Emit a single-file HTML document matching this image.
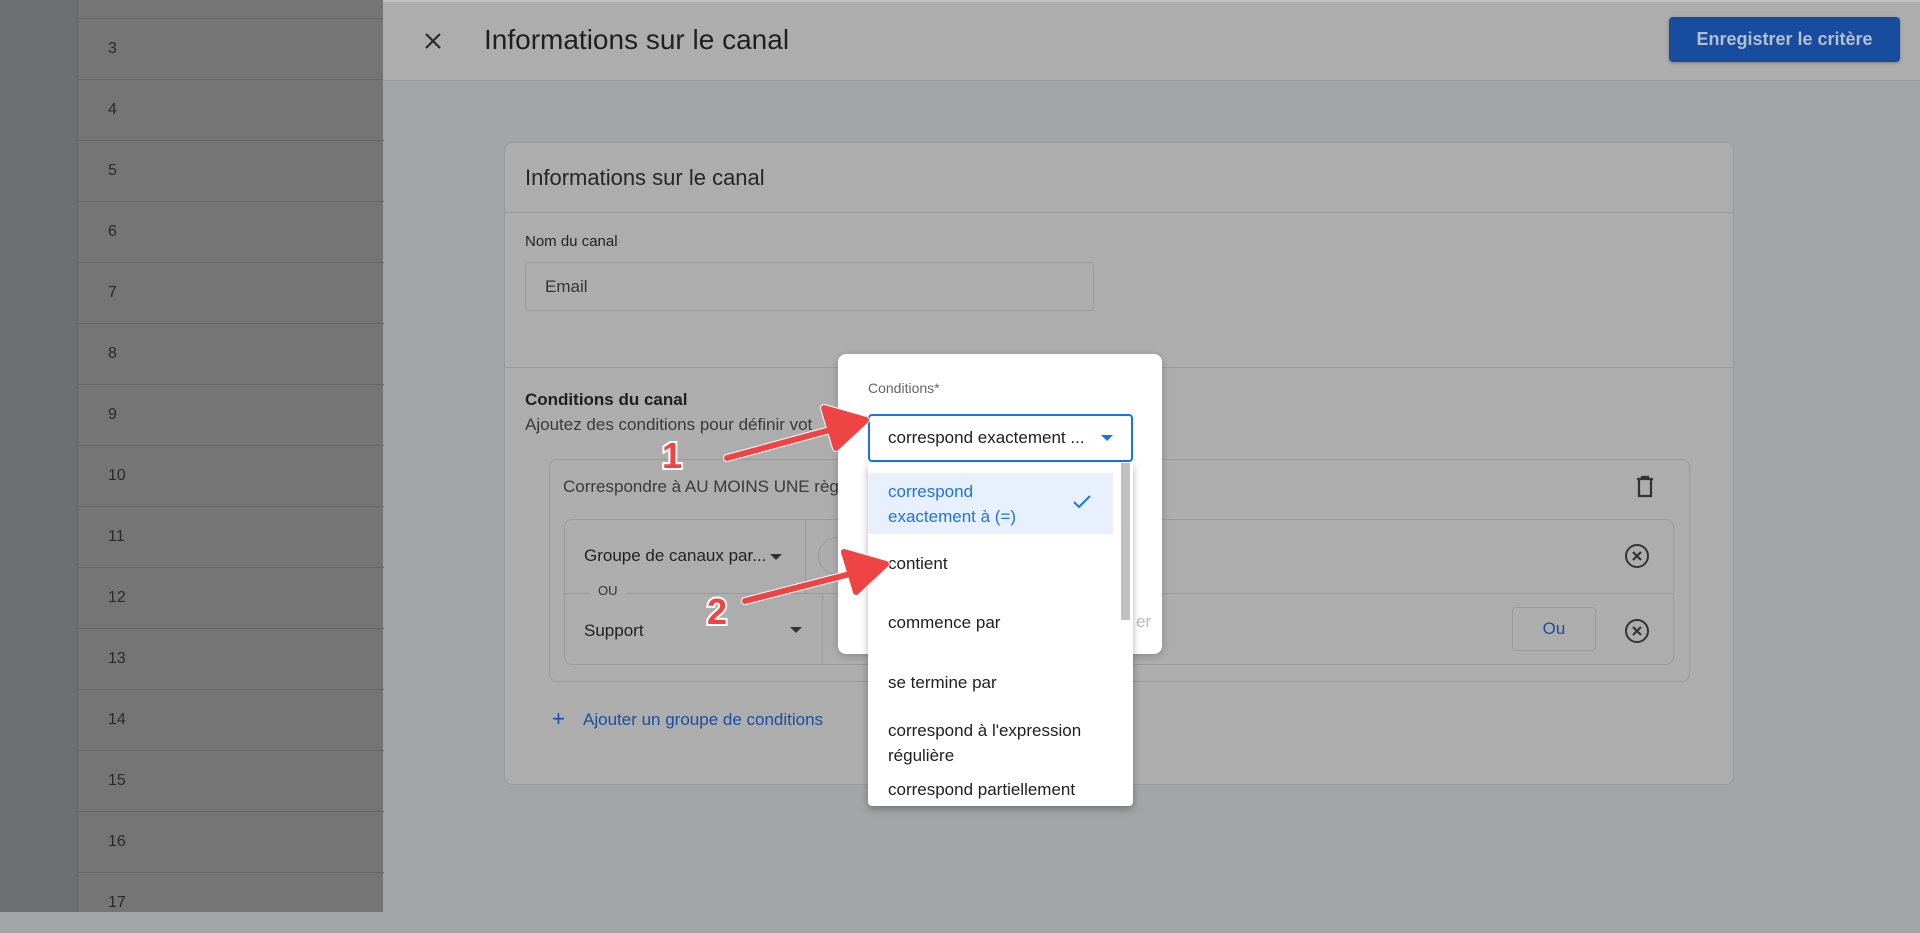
<!DOCTYPE html>
<html><head><meta charset="utf-8"><style>
*{margin:0;padding:0;box-sizing:border-box}
body{width:1920px;height:912px;overflow:hidden;position:relative;font-family:"Liberation Sans",Arial,sans-serif;background:#a4a5a7}
.a{position:absolute}
.left{left:0;top:0;width:77px;height:912px;background:#6d6e6f}
.tbl{left:77px;top:0;width:306px;height:912px;background:#757575;border-left:1px solid #666}
.row{position:absolute;left:0;width:306px;border-top:1px solid #666;height:61px}
.num{position:absolute;left:30px;font-size:16px;color:#2a2a2a}
.t{white-space:nowrap}
</style></head><body>
<div class="a left"></div>
<div class="a tbl">
<div class="row" style="top:18px"></div><div class="row" style="top:79px"></div><div class="row" style="top:140px"></div><div class="row" style="top:201px"></div><div class="row" style="top:262px"></div><div class="row" style="top:323px"></div><div class="row" style="top:384px"></div><div class="row" style="top:445px"></div><div class="row" style="top:506px"></div><div class="row" style="top:567px"></div><div class="row" style="top:628px"></div><div class="row" style="top:689px"></div><div class="row" style="top:750px"></div><div class="row" style="top:811px"></div><div class="row" style="top:872px"></div>
<div class="num" style="top:40px">3</div><div class="num" style="top:101px">4</div><div class="num" style="top:162px">5</div><div class="num" style="top:223px">6</div><div class="num" style="top:284px">7</div><div class="num" style="top:345px">8</div><div class="num" style="top:406px">9</div><div class="num" style="top:467px">10</div><div class="num" style="top:528px">11</div><div class="num" style="top:589px">12</div><div class="num" style="top:650px">13</div><div class="num" style="top:711px">14</div><div class="num" style="top:772px">15</div><div class="num" style="top:833px">16</div><div class="num" style="top:894px">17</div>
</div>
<div class="a" style="left:383px;top:0;width:1537px;height:81px;background:#adadad;border-bottom:1px solid #999;border-top:2px solid #c4c4c4"></div>
<svg class="a" style="left:423px;top:31px" width="20" height="20" viewBox="0 0 20 20"><path d="M3 3L17 17M17 3L3 17" stroke="#2a2a2a" stroke-width="2.2"/></svg>
<div class="a t" style="left:484px;top:24px;font-size:28px;color:#1f1f1f">Informations sur le canal</div>
<div class="a t" style="left:1669px;top:17px;width:231px;height:45px;background:#174c9e;border-radius:4px;color:#b4bfd2;font-size:18px;font-weight:bold;text-align:center;line-height:45px;box-shadow:0 1px 3px rgba(0,0,0,.3)">Enregistrer le critère</div>
<div class="a" style="left:504px;top:142px;width:1230px;height:643px;background:#adadad;border:1px solid #999;border-radius:8px"></div>
<div class="a t" style="left:525px;top:165px;font-size:22px;color:#262626">Informations sur le canal</div>
<div class="a" style="left:505px;top:212px;width:1228px;height:1px;background:#999"></div>
<div class="a t" style="left:525px;top:233px;font-size:15px;color:#222">Nom du canal</div>
<div class="a" style="left:525px;top:262px;width:569px;height:49px;border:1px solid #999;border-radius:4px"></div>
<div class="a t" style="left:545px;top:277px;font-size:17px;color:#333">Email</div>
<div class="a" style="left:505px;top:367px;width:1228px;height:1px;background:#999"></div>
<div class="a t" style="left:525px;top:390px;font-size:17px;font-weight:bold;color:#1f1f1f">Conditions du canal</div>
<div class="a t" style="left:525px;top:415px;font-size:17px;color:#3a3a3a">Ajoutez des conditions pour définir vot</div>
<div class="a" style="left:549px;top:459px;width:1141px;height:223px;border:1px solid #999;border-radius:8px"></div>
<div class="a t" style="left:563px;top:477px;font-size:17px;color:#3a3a3a">Correspondre à AU MOINS UNE règ</div>
<svg class="a" style="left:1634px;top:475px" width="22" height="24" viewBox="0 0 22 24"><path d="M3 4H19M8 4V2H14V4M5 4V21H17V4" fill="none" stroke="#333" stroke-width="2.2"/></svg>
<div class="a" style="left:564px;top:519px;width:1110px;height:146px;border:1px solid #999;border-radius:8px"></div>
<div class="a" style="left:565px;top:593px;width:1108px;height:1px;background:#999"></div>
<div class="a" style="left:805px;top:520px;width:1px;height:73px;background:#999"></div>
<div class="a" style="left:822px;top:594px;width:1px;height:70px;background:#999"></div>
<div class="a" style="left:818px;top:537px;width:32px;height:38px;border:1px solid #999;border-radius:19px 0 0 19px;border-right:none"></div>
<div class="a t" style="left:584px;top:546px;font-size:17px;color:#222">Groupe de canaux par...</div>
<div class="a" style="left:770px;top:554px;border:6px solid transparent;border-top:6px solid #333"></div>
<div class="a t" style="left:590px;top:583px;font-size:13px;color:#333;background:#adadad;padding:0 8px">OU</div>
<div class="a t" style="left:584px;top:621px;font-size:17px;color:#222">Support</div>
<div class="a" style="left:790px;top:627px;border:6px solid transparent;border-top:6px solid #333"></div>
<div class="a t" style="left:1512px;top:607px;width:84px;height:44px;border:1px solid #999;border-radius:4px;text-align:center;line-height:42px;font-size:17px;color:#1a4ea0">Ou</div>
<svg class="a" style="left:1624px;top:543px" width="26" height="26" viewBox="0 0 26 26"><circle cx="13" cy="13" r="11" fill="none" stroke="#333" stroke-width="2"/><path d="M9 9L17 17M17 9L9 17" stroke="#333" stroke-width="2.2"/></svg>
<svg class="a" style="left:1624px;top:618px" width="26" height="26" viewBox="0 0 26 26"><circle cx="13" cy="13" r="11" fill="none" stroke="#333" stroke-width="2"/><path d="M9 9L17 17M17 9L9 17" stroke="#333" stroke-width="2.2"/></svg>
<div class="a t" style="left:552px;top:706px;font-size:22px;color:#1a4ea0">+</div>
<div class="a t" style="left:583px;top:710px;font-size:17px;color:#1a4ea0">Ajouter un groupe de conditions</div>
<div class="a" style="left:838px;top:354px;width:324px;height:300px;background:#fff;border-radius:8px;box-shadow:0 2px 8px rgba(0,0,0,.2)"></div>
<div class="a t" style="left:1136px;top:612px;font-size:17px;color:#bbb">er</div>
<div class="a t" style="left:868px;top:380px;font-size:14px;color:#666">Conditions*</div>
<div class="a" style="left:868px;top:414px;width:265px;height:48px;border:2px solid #1a73e8;border-radius:4px"></div>
<div class="a t" style="left:888px;top:428px;font-size:17px;color:#202020">correspond exactement ...</div>
<div class="a" style="left:1101px;top:435px;border:6px solid transparent;border-top:6px solid #1a73e8"></div>
<div class="a" style="left:868px;top:463px;width:265px;height:343px;background:#fff;box-shadow:0 3px 8px rgba(0,0,0,.3);border-radius:0 0 4px 4px"></div>
<div class="a" style="left:1121px;top:463px;width:9px;height:157px;background:#c1c1c1"></div>
<div class="a" style="left:868px;top:473px;width:245px;height:61px;background:#e8f0fe"></div>
<div class="a" style="left:888px;top:479px;font-size:17px;line-height:25px;color:#1a73e8">correspond<br>exactement à (=)</div>
<svg class="a" style="left:1072px;top:494px" width="20" height="16" viewBox="0 0 20 16"><path d="M2 8L7 13L18 2" fill="none" stroke="#1a73e8" stroke-width="2"/></svg>
<div class="a t" style="left:888px;top:554px;font-size:17px;color:#202020">contient</div>
<div class="a t" style="left:888px;top:613px;font-size:17px;color:#202020">commence par</div>
<div class="a t" style="left:888px;top:673px;font-size:17px;color:#202020">se termine par</div>
<div class="a" style="left:888px;top:718px;font-size:17px;line-height:25px;color:#202020">correspond à l'expression<br>régulière</div>
<div class="a t" style="left:888px;top:780px;font-size:17px;color:#202020">correspond partiellement</div>
<svg class="a" style="left:0;top:0" width="1920" height="912" viewBox="0 0 1920 912">
<g stroke="#fff" stroke-width="8" stroke-linecap="round" fill="#fff" stroke-linejoin="round">
<path d="M727 458L830 430"/><path d="M866 420L824 408L836 448Z"/>
<path d="M745 601L850 574"/><path d="M886 564L844 552L856 592Z"/>
</g>
<g stroke="#ef4444" stroke-width="6" stroke-linecap="round" fill="#ef4444" stroke-linejoin="round">
<path d="M727 458L830 430"/><path d="M866 420L824 408L836 448Z"/>
<path d="M745 601L850 574"/><path d="M886 564L844 552L856 592Z"/>
</g>
<text x="662" y="468" font-family="Liberation Sans" font-weight="bold" font-size="36" fill="#ef4444" stroke="#fff" stroke-width="4" paint-order="stroke">1</text>
<text x="707" y="624" font-family="Liberation Sans" font-weight="bold" font-size="36" fill="#ef4444" stroke="#fff" stroke-width="4" paint-order="stroke">2</text>
</svg>
</body></html>
